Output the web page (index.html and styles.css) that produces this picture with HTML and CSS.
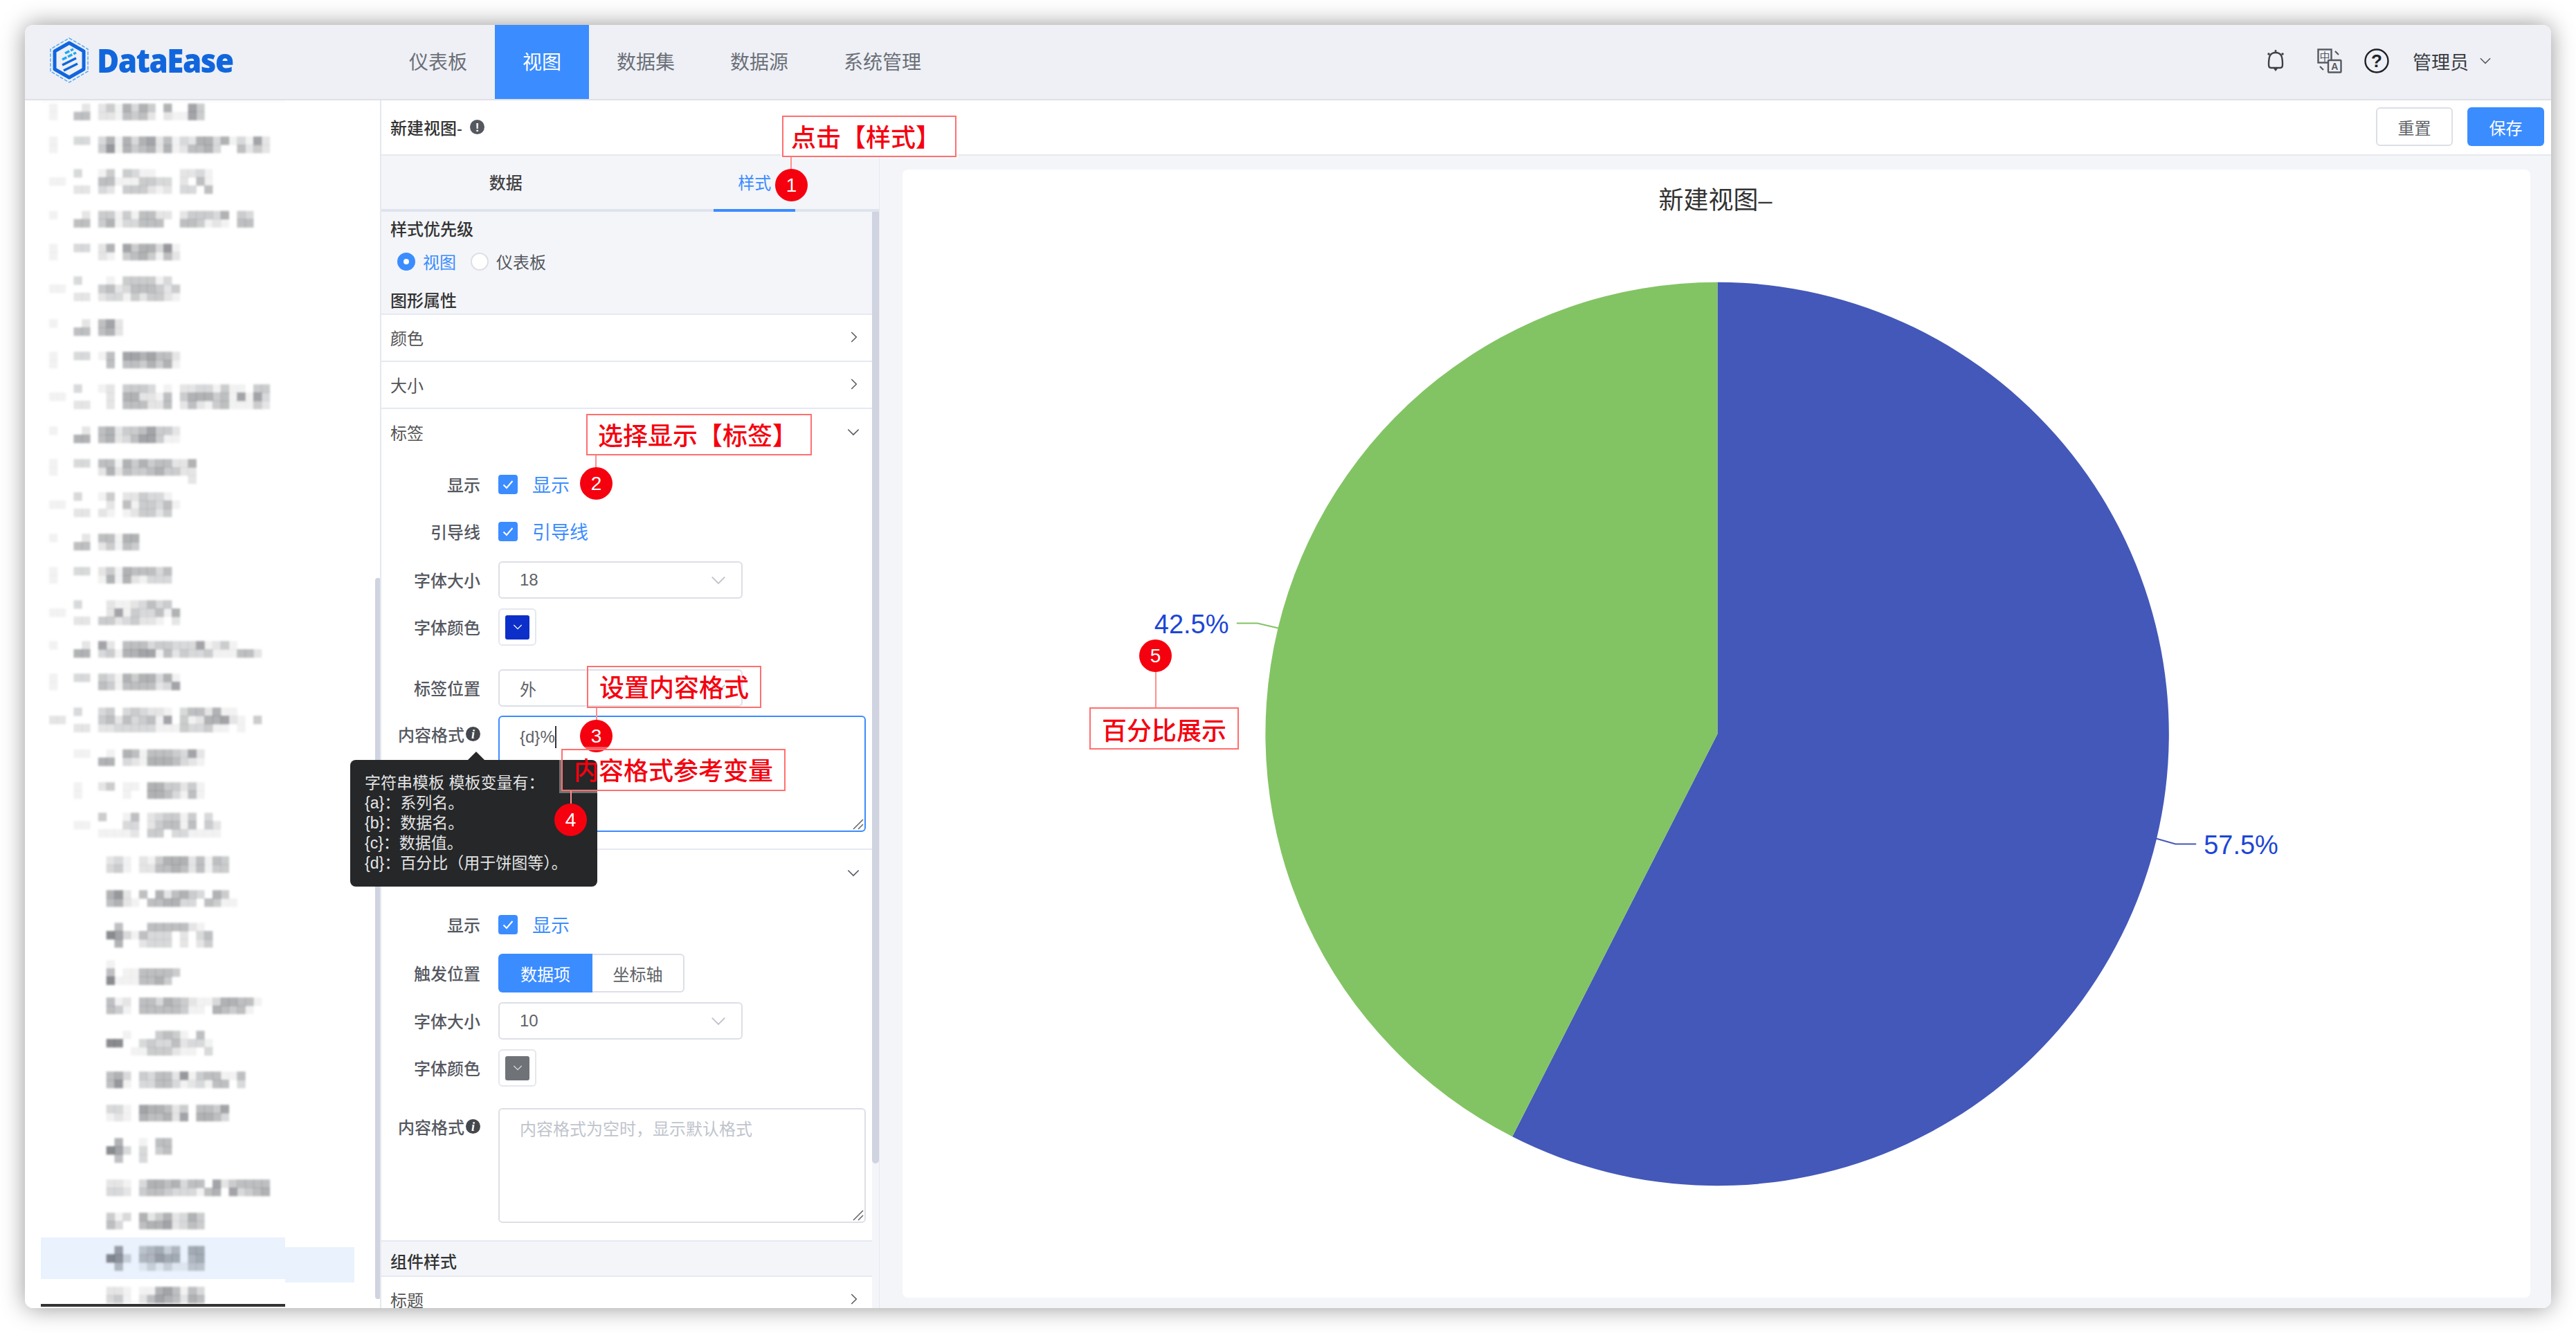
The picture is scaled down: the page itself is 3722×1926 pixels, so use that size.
FILE: index.html
```html
<!DOCTYPE html>
<html lang="zh-CN">
<head>
<meta charset="utf-8">
<title>DataEase</title>
<link rel="stylesheet" href="styles.css">
</head>
<body>
<svg class="sprite" aria-hidden="true">
  <symbol id="down" viewBox="0 0 20 12"><path d="M1.5 1.5 10 10l8.500-8.500" fill="none" stroke="currentColor" stroke-width="1.800"/></symbol>
  <symbol id="right" viewBox="0 0 12 20"><path d="M1.500 1.500 10 10l-8.500 8.500" fill="none" stroke="currentColor" stroke-width="1.800"/></symbol>
  <symbol id="check" viewBox="0 0 20 20"><path d="M3.500 10.500 8 15l8.500-10" fill="none" stroke="#fff" stroke-width="2"/></symbol>
  <symbol id="grip" viewBox="0 0 16 16"><path d="M1 15 15 1M8 15l7-7" fill="none" stroke="#606266" stroke-width="1.500"/></symbol>
</svg>
<div class="window">
  <header class="topbar">
    <div class="brand">
      <svg class="logo" viewBox="0 0 60 68">
        <path d="M30 2 57 18v32L30 66 3 50V18z" fill="none" stroke="#5aa8f5" stroke-width="1.500" stroke-dasharray="5 2"/>
        <path d="M30 9 51 21v26L30 59 9 47V21z" fill="none" stroke="#1166dd" stroke-width="5" stroke-linejoin="round"/>
        <path d="M24 24l12-6M20 33l20-10" stroke="#21a6f5" stroke-width="3.500" fill="none" stroke-dasharray="7 2"/>
        <path d="M20 41l20-10M22 49l20-10" stroke="#1166dd" stroke-width="3.500" fill="none"/>
      </svg>
      <span class="brand-name">DataEase</span>
    </div>
    <nav class="nav">
      <a class="nav-item">仪表板</a>
      <a class="nav-item is-active">视图</a>
      <a class="nav-item">数据集</a>
      <a class="nav-item">数据源</a>
      <a class="nav-item">系统管理</a>
    </nav>
    <div class="top-actions">
      <svg class="icon-bell" viewBox="0 0 26 34">
        <path d="M5 9c2-3 5-4 8-4s6 1 8 4c1.500 3 2 8 2 13 0 3-1 5-3 5H6c-2 0-3-2-3-5 0-5 .5-10 2-13z" fill="none" stroke="#3d4046" stroke-width="2.400"/>
        <path d="M10 28h6l-3 4z" fill="#3d4046"/>
        <circle cx="13" cy="2.500" r="1.500" fill="#3d4046"/><circle cx="3" cy="7" r="1.700" fill="#3d4046"/><circle cx="23" cy="7" r="1.700" fill="#3d4046"/>
      </svg>
      <svg class="icon-lang" viewBox="0 0 36 36">
        <rect x="1.500" y="1.500" width="19" height="19" fill="none" stroke="#55585e" stroke-width="2.400"/>
        <text class="lang-cn" x="11" y="16.500">中</text>
        <rect x="16" y="17" width="18.500" height="17.500" rx="1" fill="#eef0f5" stroke="#55585e" stroke-width="2.400"/>
        <text class="lang-en" x="25.200" y="31">A</text>
        <path d="M26 4l5 5M4 26l5 5" stroke="#55585e" stroke-width="2.200" fill="none"/>
      </svg>
      <svg class="icon-help" viewBox="0 0 36 36">
        <circle cx="18" cy="18" r="16.500" fill="none" stroke="#1f2125" stroke-width="2.400"/>
        <text class="help-mark" x="18" y="27">?</text>
      </svg>
      <span class="user">管理员</span>
      <svg class="user-caret"><use href="#down"/></svg>
    </div>
  </header>
  <div class="workspace">
    <aside class="sidebar">
      <div class="tree-edge"></div>
      <div class="tree-row-active"></div>
      <div class="tree-row-ext"></div>
      <svg id="mosaic" class="mosaic" viewBox="36 145 514 1745"></svg>
      <div class="tree-rule"></div>
      <div class="sidebar-thumb"></div>
    </aside>
    <main class="editor">
      <div class="titlebar">
        <span class="view-title">新建视图-</span>
        <svg class="info" viewBox="0 0 21 21"><circle cx="10.500" cy="10.500" r="10.500" fill="#55585e"/><text class="info-mark" x="10.500" y="17">!</text></svg>
        <button class="btn btn-plain">重置</button>
        <button class="btn btn-primary">保存</button>
      </div>
      <div class="editor-body">
        <section class="panel">
          <div class="tabs">
            <div class="tab">数据</div>
            <div class="tab is-active"><span class="tab-label">样式</span></div>
          </div>
          <div class="panel-scroll">
            <div class="panel-content">
              <div class="group-title group-first">样式优先级</div>
              <div class="radios">
                <span class="radio is-on"></span><span class="radio-text is-on">视图</span>
                <span class="radio"></span><span class="radio-text">仪表板</span>
              </div>
              <div class="group-title group-shape">图形属性</div>

              <div class="collapse"><span>颜色</span><svg class="arrow-r"><use href="#right"/></svg></div>
              <div class="collapse"><span>大小</span><svg class="arrow-r"><use href="#right"/></svg></div>

              <div class="section section-label">
                <div class="collapse-head"><span>标签</span><svg class="arrow-d"><use href="#down"/></svg></div>
                <div class="row row-a"><label class="label">显示</label><span class="checkbox"><svg><use href="#check"/></svg></span><span class="check-text">显示</span></div>
                <div class="row row-b"><label class="label">引导线</label><span class="checkbox"><svg><use href="#check"/></svg></span><span class="check-text">引导线</span></div>
                <div class="row row-c"><label class="label">字体大小</label><div class="select"><span>18</span><svg class="select-caret"><use href="#down"/></svg></div></div>
                <div class="row row-d"><label class="label">字体颜色</label><div class="swatch"><span class="swatch-fill swatch-blue"><svg><use href="#down"/></svg></span></div></div>
                <div class="row row-e"><label class="label">标签位置</label><div class="select"><span>外</span><svg class="select-caret"><use href="#down"/></svg></div></div>
                <div class="row row-f">
                  <label class="label label-icon">内容格式<svg class="info" viewBox="0 0 21 21"><circle cx="10.500" cy="10.500" r="10.500" fill="#44474c"/><text class="info-i" x="10.500" y="17">i</text></svg></label>
                  <div class="textarea is-focus"><span>{d}%</span><i class="caret"></i><svg class="grip"><use href="#grip"/></svg></div>
                </div>
              </div>

              <div class="section section-tip">
                <div class="collapse-head collapse-end"><svg class="arrow-d"><use href="#down"/></svg></div>
                <div class="row row-g"><label class="label">显示</label><span class="checkbox"><svg><use href="#check"/></svg></span><span class="check-text">显示</span></div>
                <div class="row row-h"><label class="label">触发位置</label><div class="segment"><span class="seg seg-on">数据项</span><span class="seg">坐标轴</span></div></div>
                <div class="row row-i"><label class="label">字体大小</label><div class="select"><span>10</span><svg class="select-caret"><use href="#down"/></svg></div></div>
                <div class="row row-j"><label class="label">字体颜色</label><div class="swatch"><span class="swatch-fill swatch-gray"><svg><use href="#down"/></svg></span></div></div>
                <div class="row row-k">
                  <label class="label label-icon">内容格式<svg class="info" viewBox="0 0 21 21"><circle cx="10.500" cy="10.500" r="10.500" fill="#44474c"/><text class="info-i" x="10.500" y="17">i</text></svg></label>
                  <div class="textarea textarea-low"><span class="placeholder">内容格式为空时，显示默认格式</span><svg class="grip"><use href="#grip"/></svg></div>
                </div>
              </div>

              <div class="group-title group-comp">组件样式</div>
              <div class="collapse"><span>标题</span><svg class="arrow-r"><use href="#right"/></svg></div>
            </div>
            <div class="panel-track"><div class="panel-thumb"></div></div>
          </div>
        </section>
        <section class="stage">
          <div class="card">
            <svg class="chart" viewBox="1303 246 2353 1629">
              <text class="chart-title" x="2478" y="302">新建视图–</text>
              <path d="M2481 1061V408A653 653 0 1 1 2184.500 1643z" fill="#4358b8"/>
              <path d="M2481 1061L2184.500 1643A653 653 0 0 1 2481 408z" fill="#82c463"/>
              <path d="M1846 908 1816 901H1786" fill="none" stroke="#82c463" stroke-width="2"/>
              <path d="M3115 1212 3143 1220H3173" fill="none" stroke="#4358b8" stroke-width="2"/>
              <text class="pie-label" x="1667" y="915">42.5%</text>
              <text class="pie-label" x="3184" y="1235">57.5%</text>
            </svg>
          </div>
        </section>
      </div>
    </main>
  </div>

  <div class="tooltip">
    <span class="tooltip-arrow"></span>
    <div>字符串模板 模板变量有：</div>
    <div>{a}：系列名。</div>
    <div>{b}：数据名。</div>
    <div>{c}：数据值。</div>
    <div>{d}：百分比（用于饼图等）。</div>
  </div>

  <div class="note note-1">点击【样式】</div><i class="lead lead-1"></i><b class="pin pin-1">1</b>
  <div class="note note-2">选择显示【标签】</div><i class="lead lead-2"></i><b class="pin pin-2">2</b>
  <div class="note note-3">设置内容格式</div><i class="lead lead-3"></i><b class="pin pin-3">3</b>
  <div class="note note-4">内容格式参考变量</div><i class="lead lead-4"></i><b class="pin pin-4">4</b>
  <div class="note note-5">百分比展示</div><i class="lead lead-5"></i><b class="pin pin-5">5</b>
</div>
<script src="mosaic.js"></script>
</body>
</html>
```
FILE: styles.css
```css
* { box-sizing: border-box; }
html, body { margin: 0; height: 100%; background: #fff; }
body {
  padding: 36px;
  font-family: "Liberation Sans", "Noto Sans CJK SC", sans-serif;
  font-size: 24px;
  color: #55585f;
  overflow: hidden;
}
.sprite { display: none; }
.window {
  position: relative;
  width: 3650px;
  height: 1854px;
  border-radius: 12px;
  background: #fff;
  display: flex;
  flex-direction: column;
  box-shadow: 0 0 34px rgba(0, 0, 0, .42);
}

/* top bar */
.topbar {
  height: 109px;
  flex: none;
  display: flex;
  align-items: stretch;
  background: #eef0f5;
  border-bottom: 2px solid #dfe1e7;
  border-radius: 12px 12px 0 0;
}
.brand { width: 515px; display: flex; align-items: center; padding: 0 0 5px 34px; gap: 10px; }
.logo { width: 60px; height: 68px; flex: none; }
.brand-name {
  font-family: "Open Sans", sans-serif;
  font-weight: 800;
  font-size: 48px;
  letter-spacing: -1.600px;
  color: #1166dd;
  line-height: 1;
  transform: scaleX(.915);
  transform-origin: left center;
}
.nav { display: flex; height: 107px; }
.nav-item {
  padding: 0 40px 4px;
  display: flex;
  align-items: center;
  font-size: 28px;
  color: #6b6f78;
}
.nav-item.is-active { background: #3b8cff; color: #fff; }
.top-actions { margin-left: auto; display: flex; align-items: center; padding: 0 86px 3px 0; }
.icon-bell { width: 26px; height: 34px; margin-right: 47px; }
.icon-lang { width: 36px; height: 36px; margin-right: 32px; }
.icon-help { width: 36px; height: 36px; margin-right: 34px; }
.lang-cn { font-size: 15px; fill: #55585e; text-anchor: middle; font-family: "Noto Sans CJK SC", sans-serif; }
.lang-en { font-size: 14px; fill: #55585e; text-anchor: middle; font-weight: 700; }
.help-mark { font-size: 26px; font-weight: 700; fill: #1f2125; text-anchor: middle; }
.user { font-size: 27px; color: #3a3d43; width: 80px; white-space: nowrap; }
.user-caret { width: 18px; height: 10px; margin-left: 16px; color: #55585e; }

/* workspace */
.workspace { flex: 1; display: flex; min-height: 0; overflow: hidden; border-radius: 0 0 12px 12px; }
.sidebar {
  position: relative;
  width: 515px;
  flex: none;
  background: #fff;
  border-right: 2px solid #e6e8ee;
  overflow: hidden;
}
.mosaic { display: block; width: 514px; height: 1745px; filter: blur(1.400px); position: relative; }
.tree-edge { position: absolute; left: 24px; top: -3px; width: 353px; height: 6px; background: #fbfbfc; z-index: 1; }
.tree-row-active { position: absolute; left: 23px; top: 1643px; width: 353px; height: 60px; background: #e9f2fd; }
.tree-row-ext { position: absolute; left: 376px; top: 1657px; width: 100px; height: 51px; background: #e9f2fd; }
.tree-rule { position: absolute; left: 23px; top: 1739px; width: 353px; height: 4px; background: #333; }
.sidebar-thumb { position: absolute; left: 506px; top: 690px; width: 8px; height: 1042px; border-radius: 4px; background: #d0d3e0; }

.editor { flex: 1; min-width: 0; display: flex; flex-direction: column; }
.titlebar {
  height: 80px;
  flex: none;
  display: flex;
  align-items: center;
  padding: 0 10px 2px 13px;
  border-bottom: 2px solid #e6e8ee;
  background: #fff;
}
.view-title { font-weight: 500; color: #333; }
.titlebar .info { margin-left: 11px; }
.info { width: 21px; height: 21px; flex: none; }
.info-mark { font-size: 17px; font-weight: 700; fill: #fff; text-anchor: middle; }
.info-i { font-size: 18px; font-weight: 700; font-style: italic; fill: #fff; text-anchor: middle; font-family: "Liberation Serif", serif; }
.btn {
  width: 111px;
  height: 56px;
  border-radius: 6px;
  font: inherit;
  padding: 0;
}
.btn-plain { margin-left: auto; background: #fff; border: 2px solid #dcdfe6; color: #606266; }
.btn-primary { margin-left: 21px; background: #3b8cff; border: 0; color: #fff; }

.editor-body { flex: 1; min-height: 0; display: flex; }
.panel {
  width: 720px;
  flex: none;
  background: #f3f5f9;
  border-right: 1px solid #e6e8ee;
  display: flex;
  flex-direction: column;
  min-height: 0;
}
.tabs { height: 81px; flex: none; display: flex; border-bottom: 4px solid #dfe3ec; }
.tab {
  flex: 1;
  display: flex;
  align-items: center;
  justify-content: center;
  font-weight: 500;
  color: #444;
  padding-bottom: 2px;
}
.tab.is-active { color: #3b8cff; position: relative; font-weight: 400; }
.tab.is-active::after {
  content: "";
  position: absolute;
  left: 50%;
  bottom: -4px;
  width: 118px;
  height: 4px;
  margin-left: -59px;
  background: #3b8cff;
}
.panel-scroll { flex: 1; min-height: 0; display: flex; overflow: hidden; }
.panel-content { width: 709px; flex: none; }
.panel-track { width: 10px; flex: none; }
.panel-thumb { width: 10px; height: 1375px; background: #d0d3e0; border-radius: 0 0 5px 5px; }

.group-title { padding-left: 13px; font-weight: 500; color: #333; display: flex; align-items: center; }
.group-first { height: 50px; padding-bottom: 3px; }
.radios { height: 43px; display: flex; align-items: center; padding-left: 23px; }
.radio { width: 26px; height: 26px; border-radius: 50%; border: 2px solid #dcdfe6; background: #fff; flex: none; }
.radio.is-on { border: 9px solid #3b8cff; }
.radio-text { margin: 0 21px 0 11px; color: #55585f; }
.radio-text.is-on { color: #3b8cff; }
.group-shape { height: 44px; margin-top: 12px; border-bottom: 2px solid #e6e9f2; }
.group-comp { height: 51px; padding-top: 6px; border-bottom: 2px solid #e6e9f2; }

.collapse, .collapse-head {
  height: 68px;
  display: flex;
  align-items: center;
  justify-content: space-between;
  padding: 0 18px 2px 13px;
  background: #fff;
  color: #555;
}
.collapse { border-bottom: 2px solid #e6e9f2; }
.collapse-end { justify-content: flex-end; }
.arrow-r { width: 10px; height: 18px; color: #55585f; margin-right: 3px; }
.arrow-d { width: 18px; height: 11px; color: #55585f; }

.section { background: #fff; border-bottom: 2px solid #e6e9f2; }
.section-label { padding-bottom: 24px; }
.section-tip { padding-bottom: 25px; }

.row { display: flex; align-items: center; }
.label { width: 143px; margin-right: 26px; padding-bottom: 2px; text-align: right; flex: none; color: #55585f; font-weight: 500; }
.label-icon { display: flex; justify-content: flex-end; align-items: center; gap: 2px; height: 54px; }
.row-a { height: 28px; margin-top: 27px; }
.row-b { height: 28px; margin-top: 40px; }
.row-c { margin-top: 29px; }
.row-d { margin-top: 14px; }
.row-e { margin-top: 34px; }
.row-f { margin-top: 13px; align-items: flex-start; }
.row-g { height: 28px; margin-top: 26px; }
.row-h { margin-top: 28px; }
.row-i { margin-top: 14px; }
.row-j { margin-top: 14px; }
.row-k { margin-top: 31px; align-items: flex-start; }

.checkbox { width: 28px; height: 28px; border-radius: 4px; background: #3b8cff; display: flex; align-items: center; justify-content: center; flex: none; }
.checkbox svg { width: 20px; height: 20px; }
.check-text { margin-left: 21px; padding-bottom: 2px; font-size: 27px; color: #3b8cff; }

.select {
  width: 353px;
  height: 54px;
  border: 2px solid #dcdfe6;
  border-radius: 6px;
  display: flex;
  align-items: center;
  padding: 0 22px 0 29px;
  color: #606266;
  background: #fff;
}
.select-caret { width: 22px; height: 13px; margin-left: auto; color: #c0c4cc; }

.swatch {
  width: 55px;
  height: 54px;
  border: 2px solid #e4e7ed;
  border-radius: 6px;
  display: flex;
  align-items: center;
  justify-content: center;
  background: #fff;
}
.swatch-fill { width: 35px; height: 35px; border-radius: 3px; display: flex; align-items: center; justify-content: center; color: #fff; }
.swatch-fill svg { width: 14px; height: 8px; }
.swatch-blue { background: #0d2fc9; }
.swatch-gray { background: #6f7276; color: #ddd; }

.textarea {
  position: relative;
  width: 531px;
  height: 168px;
  border: 2px solid #dcdfe6;
  border-radius: 6px;
  padding: 12px 29px;
  background: #fff;
  color: #606266;
  display: flex;
  align-items: flex-start;
  line-height: 34px;
}
.textarea-low { height: 166px; }
.textarea.is-focus { border-color: #3b8cff; }
.caret { display: block; width: 2px; height: 32px; background: #333; margin-top: 1px; }
.placeholder { color: #c0c4cc; }
.grip { position: absolute; right: 1px; bottom: 1px; width: 16px; height: 16px; }

.segment { display: flex; height: 56px; }
.seg {
  width: 133px;
  display: flex;
  align-items: center;
  justify-content: center;
  border: 2px solid #dcdfe6;
  border-left: 0;
  border-radius: 0 6px 6px 0;
  color: #606266;
}
.seg-on { width: 136px; background: #3b8cff; border: 0; color: #fff; border-radius: 6px 0 0 6px; }

.stage { flex: 1; min-width: 0; background: #f3f5f9; padding: 20px 30px 15px 33px; }
.card { height: 100%; background: #fff; border-radius: 8px; overflow: hidden; }
.chart { display: block; width: 100%; height: 100%; }
.chart-title { font-size: 36px; fill: #333; text-anchor: middle; }
.pie-label { font-size: 38px; fill: #1c46d6; }

/* overlays */
.tooltip {
  position: absolute;
  left: 470px;
  top: 1062px;
  width: 357px;
  height: 183px;
  padding: 19px 21px;
  background: #252729;
  border-radius: 8px;
  color: #e4e4e4;
  font-size: 23px;
  line-height: 29px;
  white-space: nowrap;
}
.tooltip-arrow {
  position: absolute;
  left: 170px;
  top: -12px;
  border-left: 12px solid transparent;
  border-right: 12px solid transparent;
  border-bottom: 12px solid #252729;
}
.note {
  position: absolute;
  display: flex;
  align-items: center;
  justify-content: center;
  padding-bottom: 3px;
  border: 2px solid #ff6f6f;
  box-shadow: 0 0 0 3px rgba(255, 255, 255, .35);
  color: #f5000f;
  font-size: 36px;
  font-weight: 500;
  white-space: nowrap;
}
.note-1 { left: 1094px; top: 131px; width: 252px; height: 60px; background: #fff; padding-right: 10px; }
.note-2 { left: 811px; top: 562px; width: 326px; height: 60px; background: #fff; padding-right: 4px; }
.note-3 { left: 812px; top: 926px; width: 252px; height: 61px; }
.note-4 { left: 775px; top: 1046px; width: 324px; height: 61px; }
.note-5 { left: 1538px; top: 986px; width: 216px; height: 61px; background: #fff; padding-bottom: 0; }
.lead { position: absolute; width: 2px; background: #ff8f8f; }
.lead-1 { left: 1106px; top: 191px; height: 20px; }
.lead-2 { left: 824px; top: 622px; height: 20px; }
.lead-3 { left: 825px; top: 987px; height: 20px; }
.lead-4 { left: 788px; top: 1107px; height: 20px; }
.lead-5 { left: 1633px; top: 934px; height: 52px; }
.pin {
  position: absolute;
  width: 47px;
  height: 47px;
  border-radius: 50%;
  background: #f5000f;
  color: #fff;
  font-size: 28px;
  font-weight: 400;
  display: flex;
  align-items: center;
  justify-content: center;
}
.pin-1 { left: 1084px; top: 208px; }
.pin-2 { left: 802px; top: 639px; }
.pin-3 { left: 802px; top: 1004px; }
.pin-4 { left: 765px; top: 1125px; }
.pin-5 { left: 1610px; top: 888px; }
```
FILE: mosaic.js
```js
// The tree in the reference is pixelated out; each row is a list of lines, one digit per cell (darkness 0-9).
var ROWS = [
  [161.5, ["1000202416364060074", "1005502215452021174"]],
  [209, ["100330361636725132663613172", "100000481645626125563005242"]],
  [262, ["00030014043110002231", "11000055111443302051", "00022032044421203305"]],
  [316.5, ["1000204414155220244436043", "0005504613355500554121055"]],
  [364, ["1003302607466381", "1000002104564152"]],
  [417, ["0003000104444130", "1100004523555424", "0002202331424421"]],
  [473, ["100020572", "000550562"]],
  [520, ["1003301507767552", "1000000505546461"]],
  [573, ["000300120444301022331411044", "110000020662215046664517173", "000220020555225025214511142"]],
  [628, ["1000205624457442", "0006605623577411"]],
  [681, ["100330551646455226", "100000262544564422", "000000000000000002"]],
  [729, ["0003001402243310", "1100000205144351", "0002202101244240"]],
  [783, ["10002055166", "00055024154"]],
  [831, ["100330241655535", "100000161621333"]],
  [885, ["0003000211235340", "1100000271433516", "0002204423422102"]],
  [938, ["10002072055534433371241", "00066034166771524334111552"]],
  [985, ["1003304316466361", "1000005415555237"]],
  [1040, ["000300340343221035526110", "22000045253451704126672104", "000220223333311143341101"]],
  [1094.5, ["0001100106515554372", "00000066032166653210"]],
  [1142, ["0001002401106644241", "00010000010066531510"]],
  [1192, ["00000040015023441403", "000110000330245515042", "000000111120440331111"]],
  [1249, ["0000000231021466625154", "0000000341022556525144"]],
  [1298, ["0000000682050625643064", "000000056210556633054110"]],
  [1351, ["00000000500055555210", "00000009731533302035", "00000000600233302024"]],
  [1405, ["00000001", "00000005011555540", "00000009111556400"]],
  [1453, ["00000005120553654211366551", "0000000541055555411065451"]],
  [1507, ["00000000010004541050", "00000009900343352331", "00000000001144421103"]],
  [1560, ["000000056304355281455115", "000000058103355312315503"]],
  [1608, ["00000003310766524055470", "00000001210655627066530"]],
  [1662, ["0000000060010550", "0000000973030450", "0000000050030000"]],
  [1716, ["000000022103665635507245555", "000000033204554333156073456"]],
  [1764, ["0000000413062462364", "0000000530056672354"]],
  [1818, ["0000000070045635066", "0000000983055766056", "0000000050013131144"]],
  [1871, ["0000000221011675153", "0000000341025765265"]]
];
var CELL = 11.8, X0 = 71, NS = "http://www.w3.org/2000/svg";
var svg = document.getElementById("mosaic");
ROWS.forEach(function (row) {
  var cy = row[0], lines = row[1];
  var top = cy - lines.length * CELL / 2;
  lines.forEach(function (line, li) {
    for (var i = 0; i < line.length; i++) {
      var d = +line[i];
      if (!d) continue;
      var r = document.createElementNS(NS, "rect");
      r.setAttribute("x", X0 + i * CELL);
      r.setAttribute("y", top + li * CELL);
      r.setAttribute("width", CELL + 0.5);
      r.setAttribute("height", CELL + 0.5);
      r.setAttribute("fill", "#2c2f36");
      r.setAttribute("fill-opacity", (d * 0.062).toFixed(3));
      svg.appendChild(r);
    }
  });
});
```
